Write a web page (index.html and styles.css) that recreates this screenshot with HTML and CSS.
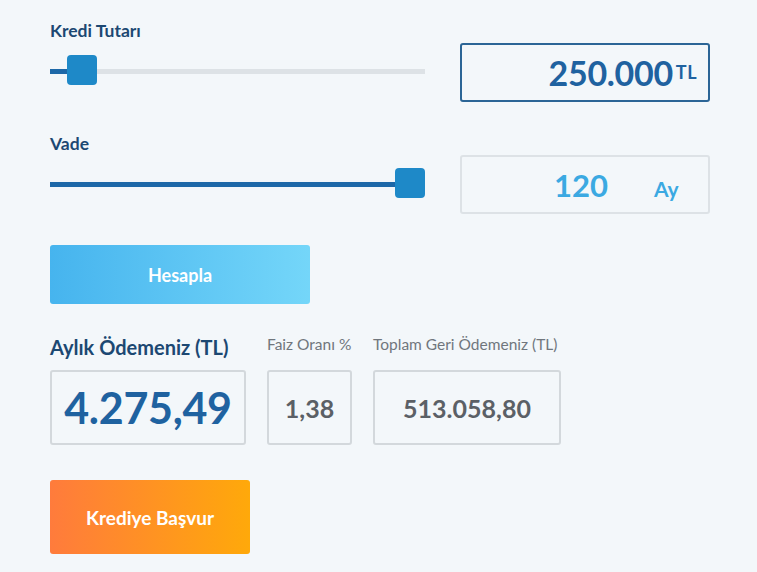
FILE: index.html
```html
<!DOCTYPE html>
<html lang="tr">
<head>
<meta charset="utf-8">
<link rel="stylesheet" href="styles.css">
</head>
<body>
<div class="calc">
  <div class="row">
    <div class="slider-col">
      <div class="label">Kredi Tutarı</div>
      <div class="slider">
        <div class="track"><div class="fill fill-amount"></div></div>
        <div class="thumb thumb-amount"></div>
      </div>
    </div>
    <div class="field field-amount"><span class="num">250.000</span><span class="unit">TL</span></div>
  </div>
  <div class="row row-term">
    <div class="slider-col">
      <div class="label">Vade</div>
      <div class="slider">
        <div class="track"><div class="fill fill-term"></div></div>
        <div class="thumb thumb-term"></div>
      </div>
    </div>
    <div class="field field-term"><span class="num">120</span><span class="unit">Ay</span></div>
  </div>
  <button class="btn btn-calc">Hesapla</button>
  <div class="results">
    <div class="res res-main">
      <div class="res-label main-label">Aylık Ödemeniz (TL)</div>
      <div class="res-box box-main">4.275,49</div>
    </div>
    <div class="res res-rate">
      <div class="res-label">Faiz Oranı %</div>
      <div class="res-box box-small">1,38</div>
    </div>
    <div class="res res-total">
      <div class="res-label">Toplam Geri Ödemeniz (TL)</div>
      <div class="res-box box-small">513.058,80</div>
    </div>
  </div>
  <button class="btn btn-apply">Krediye Başvur</button>
</div>
</body>
</html>
```
FILE: styles.css
```css
html, body {
  margin: 0;
  padding: 0;
  background: #f3f7fa;
}
body {
  font-family: "Lato", "Noto Sans", sans-serif;
  width: 757px;
  height: 572px;
  overflow: hidden;
}
.calc {
  padding: 20px 0 0 50px;
  width: 660px;
}
.row {
  display: flex;
  align-items: flex-start;
  justify-content: space-between;
}
.row-term {
  margin-top: 31px;
}
.slider-col {
  width: 375px;
}
.label {
  font-size: 17.5px;
  font-weight: 700;
  color: #1c4872;
  line-height: 22px;
  height: 22px;
}
.slider {
  position: relative;
  height: 30px;
  margin-top: 13px;
}
.track {
  position: absolute;
  left: 0;
  right: 0;
  top: 14px;
  height: 5px;
  background: #dde2e6;
}
.row-term .track { right: 5px; }
.fill {
  height: 100%;
  background: #1d68a8;
}
.fill-amount { width: 20px; }
.fill-term { width: 100%; }
.thumb {
  position: absolute;
  top: 0;
  width: 30px;
  height: 30px;
  border-radius: 4px;
  background: #1e89c8;
}
.thumb-amount { left: 17px; }
.thumb-term { left: 345px; }
.field {
  box-sizing: border-box;
  width: 250px;
  height: 59px;
  border-radius: 3px;
  display: flex;
  align-items: center;
}
.field-amount {
  margin-top: 23px;
  border: 2px solid #2b6596;
  justify-content: flex-end;
  padding-right: 11px;
  color: #1f62a0;
}
.field-amount .num {
  font-size: 34px;
  font-weight: 700;
  letter-spacing: -0.3px;
}
.field-amount .unit {
  font-size: 18px;
  font-weight: 700;
  margin-left: 3px;
  margin-top: -1px;
  letter-spacing: 0.5px;
}
.field-term {
  margin-top: 22px;
  border: 2px solid #dde2e6;
  color: #3ba9e2;
  padding-left: 92px;
}
.field-term .num {
  font-size: 31px;
  font-weight: 700;
}
.field-term .unit {
  font-size: 21px;
  font-weight: 700;
  margin-left: 46px;
  margin-top: 8px;
}
.btn {
  display: flex;
  align-items: center;
  justify-content: center;
  border: 0;
  border-radius: 3px;
  color: #fff;
  font-family: inherit;
  font-weight: 700;
  padding: 0;
}
.btn-calc {
  margin-top: 31px;
  width: 260px;
  height: 59px;
  font-size: 18px;
  background: linear-gradient(90deg, #46b4ee, #74d6f9);
}
.results {
  display: flex;
  gap: 21px;
  margin-top: 30px;
}
.res-label {
  font-size: 15.5px;
  color: #70767d;
  height: 36px;
  line-height: 20px;
  white-space: nowrap;
}
.main-label {
  font-size: 20px;
  font-weight: 700;
  color: #1c4872;
  line-height: 24px;
  margin-top: 1px;
  height: 35px;
}
.res-box {
  box-sizing: border-box;
  height: 75px;
  border: 2px solid #d3d8dc;
  border-radius: 3px;
  display: flex;
  align-items: center;
  justify-content: center;
}
.res-main { width: 196px; }
.res-rate { width: 85px; }
.res-total { width: 188px; }
.box-main {
  color: #1f62a0;
  font-size: 43px;
  font-weight: 700;
  letter-spacing: -0.3px;
}
.box-small {
  color: #5b6066;
  font-size: 25px;
  font-weight: 700;
}
.btn-apply {
  margin-top: 35px;
  width: 200px;
  height: 74px;
  font-size: 19px;
  background: linear-gradient(90deg, #ff7b3c, #ffa90a);
}
```
